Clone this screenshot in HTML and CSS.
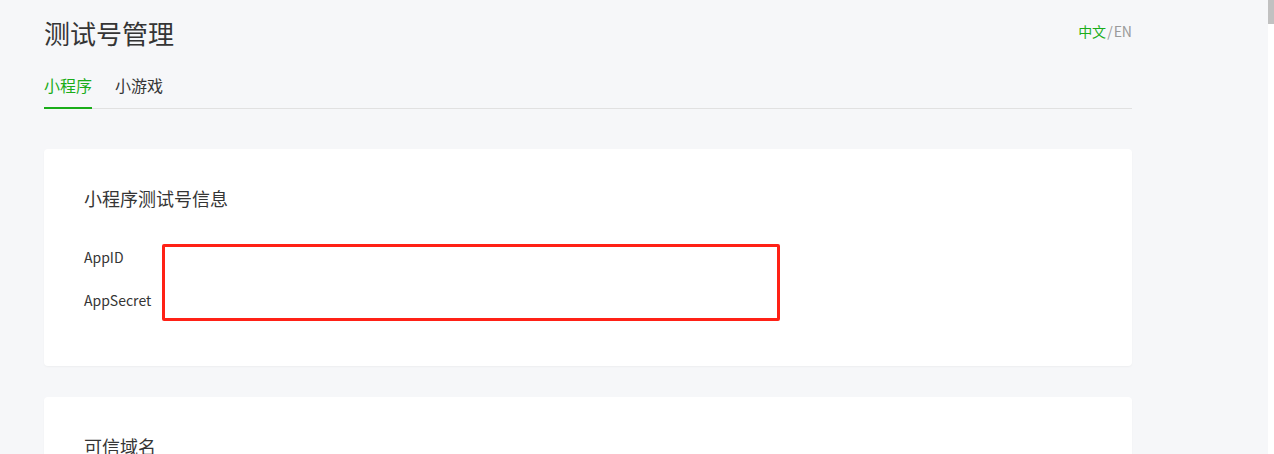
FILE: index.html
```html
<!DOCTYPE html>
<html lang="zh-CN">
<head>
    <meta charset="UTF-8">
    <meta name="viewport" content="width=device-width, initial-scale=1.0">
    <title>测试号管理</title>
    <link rel="stylesheet" href="styles.css">
</head>
<body>
    <div class="page">
        <div class="main">
            <header class="head">
                <h1>测试号管理</h1>
                <div class="lang"><a class="cur" href="#">中文</a><span class="sep">/</span><a href="#">EN</a></div>
            </header>

            <!-- tabs -->
            <ul class="tabs">
                <li class="active">小程序</li>
                <li>小游戏</li>
            </ul>

            <div class="card">
                <h2>小程序测试号信息</h2>
                <div class="info">
                    <div class="labels">
                        <div class="row">AppID</div>
                        <div class="row">AppSecret</div>
                    </div>
                    <div class="mark"></div>
                </div>
            </div>

            <div class="card">
                <h2>可信域名</h2>
            </div>
        </div>
    </div>
    <div class="scrollbar"><div class="thumb"></div></div>
</body>
</html>
```

FILE: styles.css
```css
* {
  margin: 0;
  padding: 0;
  box-sizing: border-box;
}

html, body {
  height: 100%;
  overflow: hidden;
}

body {
  font-family: "Noto Sans CJK SC", "Noto Sans", sans-serif;
  background-color: #fff;
  color: #353535;
  display: flex;
}

.page {
  width: 1268px;
  height: 100%;
  background-color: #f6f7f9;
  overflow: hidden;
}

.main {
  width: 1088px;
  margin-left: 44px;
}

.head {
  display: flex;
  justify-content: space-between;
  align-items: flex-start;
  padding-top: 13px;
}

.head h1 {
  font-size: 26px;
  font-weight: normal;
  line-height: 40px;
  color: #353535;
}

.lang {
  font-size: 14px;
  line-height: 20px;
  margin-top: 8px;
  color: #9a9a9a;
}

.lang a {
  text-decoration: none;
  color: #9a9a9a;
}

.lang a.cur {
  color: #1aad19;
}

.sep {
  margin: 0 1px;
}

.tabs {
  display: flex;
  list-style: none;
  border-bottom: 1px solid #e1e1e1;
  margin-top: 20px;
}

.tabs li {
  font-size: 16px;
  line-height: 24px;
  padding-bottom: 10px;
  margin-right: 23px;
  margin-bottom: -1px;
  color: #353535;
  border-bottom: 2px solid transparent;
}

.tabs li.active {
  color: #1aad19;
  border-bottom-color: #1aad19;
}

.card {
  background-color: #fff;
  border-radius: 4px;
  box-shadow: 0 1px 2px rgba(0, 0, 0, 0.04);
  padding: 35px 40px 45px;
  margin-top: 40px;
}

.card + .card {
  margin-top: 31px;
}

.card h2 {
  font-size: 18px;
  font-weight: normal;
  line-height: 28px;
  color: #353535;
}

.info {
  display: flex;
  align-items: flex-start;
  margin-top: 29px;
}

.labels {
  padding-top: 6px;
}

.row {
  font-size: 14px;
  line-height: 20px;
  margin-bottom: 23px;
}

.row:last-child {
  margin-bottom: 0;
}

.mark {
  width: 618px;
  height: 77px;
  margin-top: 3px;
  margin-left: 11px;
  border: 3px solid #ff2116;
  border-radius: 2px;
}

.scrollbar {
  width: 6px;
  height: 100%;
  background-color: #fff;
}

.thumb {
  height: 24px;
  background-color: #c1c1c1;
}
```
